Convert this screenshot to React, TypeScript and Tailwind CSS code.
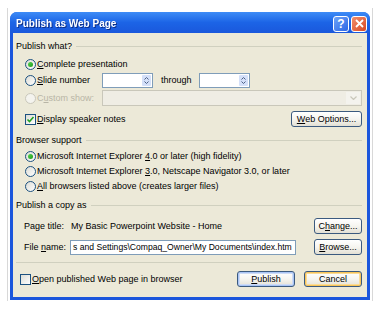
import React from "react";

const U = ({ children }: { children: React.ReactNode }) => <span className="underline underline-offset-[1px]">{children}</span>;

function Radio({ checked = false, disabled = false }: { checked?: boolean; disabled?: boolean }) {
  return (
    <span
      className={
        "w-[11px] h-[11px] rounded-full border flex items-center justify-center shrink-0 " +
        (disabled ? "border-[#cac8bb] bg-[#f4f3ee]" : "border-[#1c5180] bg-gradient-to-br from-[#dcdcd5] to-white")
      }
    >
      {checked && <span className="w-[5px] h-[5px] rounded-full bg-gradient-to-br from-[#55d651] to-[#1b9a1b]" />}
    </span>
  );
}

function Check({ checked = false }: { checked?: boolean }) {
  return (
    <span className="w-[11px] h-[11px] border border-[#1c5180] bg-gradient-to-br from-[#dcdcd5] to-white flex items-center justify-center shrink-0">
      {checked && (
        <svg width="9" height="9" viewBox="0 0 9 9">
          <path d="M1.5 4.5 L3.5 6.5 L7.5 2" stroke="#21a121" strokeWidth="1.6" fill="none" />
        </svg>
      )}
    </span>
  );
}

function Spin({ className = "" }: { className?: string }) {
  return (
    <div className={"h-[15px] w-[51px] border border-[#7f9db9] bg-white flex justify-end items-stretch p-[1px] " + className}>
      <div className="w-[9px] bg-[#d4e0f9] flex flex-col items-center justify-center gap-[1px] rounded-[1px]">
        <svg width="5" height="3" viewBox="0 0 5 3"><path d="M0.5 2.5 L2.5 0.5 L4.5 2.5" stroke="#4d6185" strokeWidth="1" fill="none" /></svg>
        <svg width="5" height="3" viewBox="0 0 5 3"><path d="M0.5 0.5 L2.5 2.5 L4.5 0.5" stroke="#4d6185" strokeWidth="1" fill="none" /></svg>
      </div>
    </div>
  );
}

function Btn({ children, w, variant = "normal" }: { children: React.ReactNode; w: string; variant?: "normal" | "default" | "hot" }) {
  const ring =
    variant === "default"
      ? " shadow-[inset_0_0_0_1px_#a9c4f5,inset_0_0_0_2px_#cfdcf5]"
      : variant === "hot"
      ? " shadow-[inset_0_0_0_1px_#f7c45a,inset_0_0_0_2px_#fbdc98]"
      : "";
  return (
    <div
      className={
        "h-[16px] border border-[#3b5a7f] rounded-[3px] bg-gradient-to-b from-white via-[#f6f5f0] to-[#e3e0d4] flex items-center justify-center text-black shrink-0 " +
        w +
        ring
      }
    >
      {children}
    </div>
  );
}

function GroupLabel({ children }: { children: React.ReactNode }) {
  return (
    <div className="h-[11px] flex items-center gap-[4px] pl-[3px]">
      <span className="whitespace-nowrap">{children}</span>
      <div className="flex-1 h-px bg-[#d0d0bf]" />
    </div>
  );
}

export default function App() {
  return (
    <div className="w-[386px] h-[311px] bg-white pt-[8px] pl-[7px] font-['Liberation_Sans',Arial,sans-serif] text-[9px] leading-[11px] text-black">
      <div className="w-[366px] h-[293px] border-l border-r border-[#d8d8d8] pt-[4px] pl-[2px]">
        <div className="w-[360px] h-[288px] rounded-t-[7px] bg-[#1b56dc] flex flex-col overflow-hidden">
          {/* Title bar */}
          <div className="h-[21px] shrink-0 bg-gradient-to-b from-[#3e8cf6] via-[#1c64e6] to-[#1a58dc] flex items-center pl-[6px] pr-[3px]">
            <span className="flex-1 text-white font-bold text-[10px] leading-[12px] drop-shadow-[1px_1px_0_#0b2f8a] pt-[2px]">Publish as Web Page</span>
            <div className="flex items-center gap-[2px] pt-[2px]">
              <div className="w-[16px] h-[16px] rounded-[3px] border border-white bg-gradient-to-br from-[#6ea3f7] to-[#2d66e6] flex items-center justify-center text-white font-bold text-[12px] leading-[12px]">?</div>
              <div className="w-[16px] h-[16px] rounded-[3px] border border-white bg-gradient-to-br from-[#f08e6c] to-[#d8461f] flex items-center justify-center">
                <svg width="9" height="9" viewBox="0 0 9 9"><path d="M1 1 L8 8 M8 1 L1 8" stroke="white" strokeWidth="1.8" /></svg>
              </div>
            </div>
          </div>
          {/* Body */}
          <div className="flex-1 mx-[3px] mb-[3px] bg-[#ece9d8] flex flex-col pt-[8px] pr-[5px]">
            <GroupLabel>Publish what?</GroupLabel>
            <div className="h-[14px] mt-[5px] flex items-center gap-[1px] pl-[12px]">
              <Radio checked />
              <span><U>C</U>omplete presentation</span>
            </div>
            <div className="h-[16px] mt-[1px] flex items-center pl-[12px]">
              <Radio />
              <span className="ml-[1px] w-[65px]"><U>S</U>lide number</span>
              <Spin />
              <span className="ml-[8px] w-[38px]">throu<U>g</U>h</span>
              <Spin />
            </div>
            <div className="h-[16px] mt-[2px] flex items-center pl-[12px]">
              <Radio disabled />
              <span className="ml-[1px] w-[65px] text-[#b8b5a6]">C<U>u</U>stom show:</span>
              <div className="flex-1 h-[16px] border border-[#c9c7ba] bg-[#efede4] flex justify-end p-[1px]">
                <div className="w-[14px] bg-[#f4f3ee] flex items-center justify-center">
                  <svg width="7" height="4" viewBox="0 0 7 4"><path d="M0.5 0.5 L3.5 3.5 L6.5 0.5" stroke="#c9c7ba" strokeWidth="1.2" fill="none" /></svg>
                </div>
              </div>
            </div>
            <div className="h-[16px] mt-[5px] flex items-center pl-[12px]">
              <Check checked />
              <span className="ml-[1px] flex-1"><U>D</U>isplay speaker notes</span>
              <Btn w="w-[71px]"><span><U>W</U>eb Options...</span></Btn>
            </div>
            <div className="mt-[8px]">
              <GroupLabel>Browser support</GroupLabel>
            </div>
            <div className="h-[15px] mt-[3px] flex items-center gap-[1px] pl-[12px]">
              <Radio checked />
              <span>Microsoft Internet Explorer <U>4</U>.0 or later (high fidelity)</span>
            </div>
            <div className="h-[15px] flex items-center gap-[1px] pl-[12px]">
              <Radio />
              <span>Microsoft Internet Explorer <U>3</U>.0, Netscape Navigator 3.0, or later</span>
            </div>
            <div className="h-[15px] flex items-center gap-[1px] pl-[12px]">
              <Radio />
              <span><U>A</U>ll browsers listed above (creates larger files)</span>
            </div>
            <div className="mt-[6px]">
              <GroupLabel>Publish a copy as</GroupLabel>
            </div>
            <div className="h-[16px] mt-[7px] flex items-center pl-[11px]">
              <span className="w-[47px]">Page title:</span>
              <span className="flex-1">My Basic Powerpoint Website - Home</span>
              <Btn w="w-[48px]"><span>C<U>h</U>ange...</span></Btn>
            </div>
            <div className="h-[16px] mt-[5px] flex items-center pl-[11px]">
              <span className="w-[46px]">File <U>n</U>ame:</span>
              <div className="w-[226px] h-[15px] border border-[#7f9db9] bg-white flex items-center pl-[2px] overflow-hidden whitespace-nowrap text-[8.6px]">
                s and Settings\Compaq_Owner\My Documents\index.htm
              </div>
              <div className="flex-1" />
              <Btn w="w-[48px]"><span><U>B</U>rowse...</span></Btn>
            </div>
            <div className="h-px bg-[#d0d0bf] mt-[7px] ml-[3px]" />
            <div className="h-[16px] mt-[8px] flex items-center pl-[7px]">
              <Check />
              <span className="ml-[1px] flex-1"><U>O</U>pen published Web page in browser</span>
              <Btn w="w-[58px]" variant="default"><span><U>P</U>ublish</span></Btn>
              <div className="w-[9px]" />
              <Btn w="w-[58px]" variant="hot"><span>Cancel</span></Btn>
            </div>
          </div>
        </div>
      </div>
    </div>
  );
}
